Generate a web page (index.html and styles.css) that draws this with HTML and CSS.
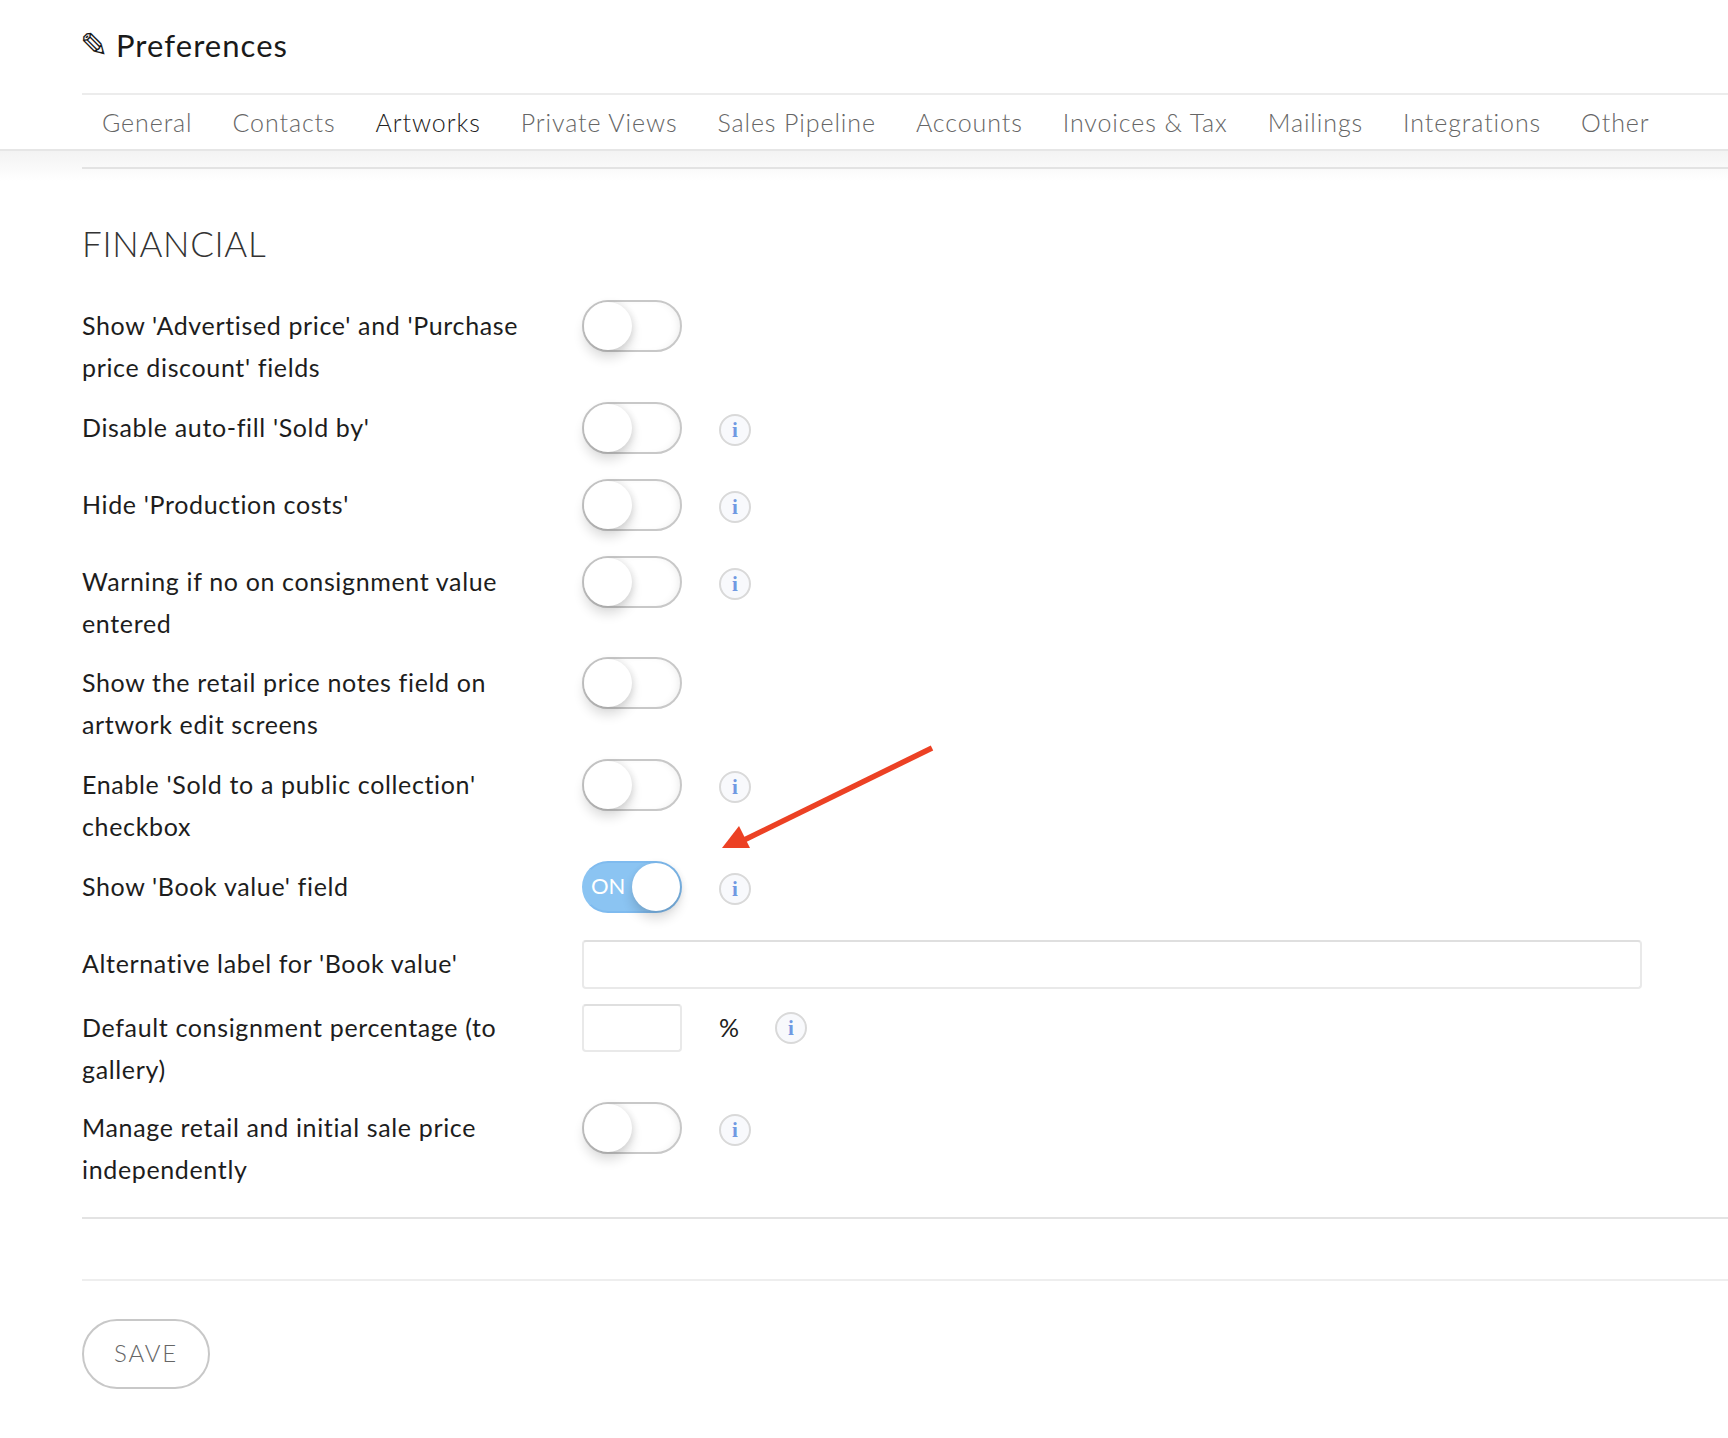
FILE: index.html
```html
<!DOCTYPE html>
<html lang="en">
<head>
<meta charset="utf-8">
<title>Preferences</title>
<link rel="stylesheet" href="styles.css">
</head>
<body>
<header class="top">
  <h1 class="title"><span class="pencil">✎</span>Preferences</h1>
  <nav class="tabs">
    <a class="tab">General</a>
    <a class="tab">Contacts</a>
    <a class="tab active">Artworks</a>
    <a class="tab">Private Views</a>
    <a class="tab">Sales Pipeline</a>
    <a class="tab">Accounts</a>
    <a class="tab">Invoices &amp; Tax</a>
    <a class="tab">Mailings</a>
    <a class="tab">Integrations</a>
    <a class="tab">Other</a>
  </nav>
</header>
<main class="main">
  <hr class="rule first">
  <h2 class="heading">FINANCIAL</h2>

  <div class="row two">
    <div class="label">Show 'Advertised price' and 'Purchase<br>price discount' fields</div>
    <div class="controls"><span class="toggle"><span class="knob"></span></span></div>
  </div>
  <div class="row">
    <div class="label">Disable auto-fill 'Sold by'</div>
    <div class="controls"><span class="toggle"><span class="knob"></span></span><span class="info">i</span></div>
  </div>
  <div class="row">
    <div class="label">Hide 'Production costs'</div>
    <div class="controls"><span class="toggle"><span class="knob"></span></span><span class="info">i</span></div>
  </div>
  <div class="row two">
    <div class="label">Warning if no on consignment value<br>entered</div>
    <div class="controls"><span class="toggle"><span class="knob"></span></span><span class="info">i</span></div>
  </div>
  <div class="row two">
    <div class="label">Show the retail price notes field on<br>artwork edit screens</div>
    <div class="controls"><span class="toggle"><span class="knob"></span></span></div>
  </div>
  <div class="row two">
    <div class="label">Enable 'Sold to a public collection'<br>checkbox</div>
    <div class="controls"><span class="toggle"><span class="knob"></span></span><span class="info">i</span></div>
  </div>
  <div class="row book-row">
    <div class="label">Show 'Book value' field</div>
    <div class="controls"><span class="toggle on"><span class="on-text">ON</span><span class="knob"></span></span><span class="info">i</span></div>
  </div>
  <div class="row input-row">
    <div class="label">Alternative label for 'Book value'</div>
    <div class="controls"><input class="field wide" type="text"></div>
  </div>
  <div class="row percent-row">
    <div class="label">Default consignment percentage (to<br>gallery)</div>
    <div class="controls"><input class="field small" type="text"><span class="unit">%</span><span class="info after-unit">i</span></div>
  </div>
  <div class="row last">
    <div class="label">Manage retail and initial sale price<br>independently</div>
    <div class="controls"><span class="toggle"><span class="knob"></span></span><span class="info">i</span></div>
  </div>

  <hr class="rule">
  <hr class="rule light">
  <button class="save" type="button">SAVE</button>
</main>

<svg class="arrow" width="240" height="120" viewBox="0 0 240 120" aria-hidden="true">
  <line x1="212" y1="8" x2="20" y2="102" stroke="#ec4124" stroke-width="5.5"/>
  <polygon points="19,86 30,108 2,108" fill="#ec4124"/>
</svg>
</body>
</html>
```
FILE: styles.css
```css
* { box-sizing: border-box; }
html, body { margin: 0; padding: 0; background: #fff; }
body {
  width: 1728px;
  height: 1438px;
  overflow: hidden;
  position: relative;
  font-family: Lato, "Open Sans", sans-serif;
  color: #1d1d1d;
}
.top {
  height: 151px;
  padding-left: 82px;
  border-bottom: 2px solid #e6e6e6;
  background: #fff;
}
.title {
  height: 93px;
  margin: 0;
  display: flex;
  align-items: center;
  font-size: 31px;
  font-weight: 400;
  letter-spacing: 1.05px;
  color: #1a1a1a;
  padding-bottom: 4px;
}
.pencil {
  width: 34px;
  font-family: "DejaVu Sans", sans-serif;
  font-size: 34px;
  line-height: 34px;
  letter-spacing: 0;
  font-weight: 400;
  margin-left: -2px;
  margin-right: 2px;
}
.tabs {
  display: flex;
  height: 56px;
  border-top: 2px solid #ececec;
  padding-left: 20px;
  align-items: center;
  gap: 40px;
  font-size: 25px;
  font-weight: 300;
  color: #666;
  padding-bottom: 1px;
}
.tab { white-space: nowrap; letter-spacing: 0.9px; }
.tab.active { color: #222; }
.main {
  padding-left: 82px;
  padding-top: 16px;
  background: linear-gradient(#f3f3f3, #fafafa 18px, #fff 30px);
  background-repeat: no-repeat;
  background-size: 100% 30px;
}
.rule {
  height: 2px;
  margin: 0;
  border: 0;
  background: #e3e3e3;
}
.rule.light { background: #eeeeee; margin-top: 60px; }
.heading {
  margin: 53px 0 0;
  height: 78px;
  font-size: 35px;
  line-height: 42px;
  font-weight: 300;
  letter-spacing: 0.7px;
  color: #333;
}
.row {
  display: flex;
  height: 77px;
  font-size: 25px;
  line-height: 42px;
}
.row.two { height: 101.67px; }
.row.book-row { height: 79.5px; }
.row.input-row { height: 64px; }
.row.percent-row { height: 98px; }
.row.last { height: 115px; }
.label {
  width: 500px;
  flex: none;
  padding-top: 4px;
  letter-spacing: 0.65px;
  white-space: nowrap;
}
.input-row .label, .percent-row .label { padding-top: 2px; }
.controls { display: flex; align-items: flex-start; }
.toggle {
  display: flex;
  flex: none;
  width: 100px;
  height: 52px;
  border: 2px solid #c8c8c8;
  border-radius: 26px;
  background: #fff;
  box-shadow: inset 30px 0 18px -14px #e8e8e8, inset -6px 0 10px -6px #e8e8e8;
  position: relative;
}
.knob {
  width: 48px;
  height: 48px;
  border-radius: 50%;
  background: #fff;
  box-shadow: 0 8px 12px rgba(0, 0, 0, 0.14), 2px 0 6px rgba(0, 0, 0, 0.08);
}
.toggle.on {
  border-color: #7fbbef;
  background: #8bc4f2;
  box-shadow: none;
  justify-content: flex-end;
  border-left-color: #8bc4f2;
}
.on-text {
  position: absolute;
  left: 7px;
  top: 0;
  line-height: 46px;
  font-size: 22px;
  font-weight: 400;
  color: #fff;
}
.info {
  width: 32px;
  height: 32px;
  flex: none;
  margin: 12px 0 0 37px;
  border: 2px solid #d9d9d9;
  border-radius: 50%;
  background: #f8f9fc;
  color: #7099e2;
  font-family: "Liberation Serif", serif;
  font-weight: 700;
  font-size: 21px;
  line-height: 29px;
  text-align: center;
}
.field {
  display: block;
  height: 49px;
  border: 2px solid #e9e9e9;
  border-top-color: #dfdfdf;
  border-radius: 4px;
  background: #fff;
  padding: 0;
  outline: none;
}
.field.wide { width: 1060px; }
.field.small { width: 100px; height: 48px; }
.unit { margin: 2px 0 0 37px; width: 19px; }
.info.after-unit { margin: 8px 0 0 37px; }
.save {
  display: block;
  width: 128px;
  height: 70px;
  margin-top: 38px;
  border: 2px solid #c8c8c8;
  border-radius: 35px;
  background: #fff;
  font-family: inherit;
  font-size: 24px;
  font-weight: 300;
  letter-spacing: 1.8px;
  color: #666;
  padding: 0 0 4px;
}
.arrow {
  position: absolute;
  left: 720px;
  top: 740px;
}
```
